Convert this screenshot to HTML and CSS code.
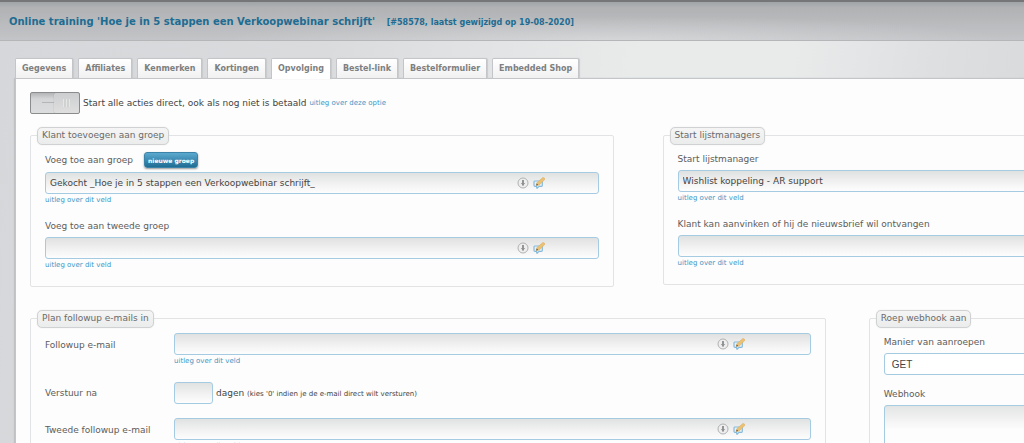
FILE: index.html
```
<!DOCTYPE html>
<html lang="nl">
<head>
  <meta charset="UTF-8">
  <meta name="viewport" content="width=device-width, initial-scale=1.0">
  <title>Online training - Opvolging</title>
  <link rel="stylesheet" href="styles.css">
</head>
<body>
  <!-- icons shared by the fields -->
  <svg class="sprite" width="0" height="0">
    <symbol id="icon-down" viewBox="0 0 12 12">
      <circle cx="6" cy="6" r="5" fill="#eeeeee" stroke="#b0b2b3" stroke-width="1"/>
      <path d="M6 3V8.500" fill="none" stroke="#7c7e7f" stroke-width="1.600"/>
      <path d="M3.800 6H8.200L6 8.600Z" fill="#8f9192"/>
    </symbol>
    <symbol id="icon-edit" viewBox="0 0 12 12">
      <path d="M1.500 4Q1 4 1 5V8.500Q1 9.300 2 9.300H3.500L4 11.300L6 9.300H8.500Q9.300 9.300 9.300 8.500V4Z" fill="#e4f1f9" stroke="#86badd" stroke-width="1.200" stroke-linejoin="round"/>
      <path d="M3.800 5.800L9.600 0.700Q11 0.300 11.700 1.500L11.500 2.800L6.200 8L3.300 8.500Z" fill="#ebc173" stroke="#dcb066" stroke-width="0.600"/>
      <path d="M3.200 8.600L3.800 6.600L5.200 8Z" fill="#55514a"/>
    </symbol>
  </svg>

  <header class="page-header">
    <h1>Online training 'Hoe je in 5 stappen een Verkoopwebinar schrijft' <small>[#58578, laatst gewijzigd op 19-08-2020]</small></h1>
  </header>

  <nav class="tabs">
    <a href="#gegevens">Gegevens</a>
    <a href="#affiliates">Affiliates</a>
    <a href="#kenmerken">Kenmerken</a>
    <a href="#kortingen">Kortingen</a>
    <a href="#opvolging" class="active">Opvolging</a>
    <a href="#bestel-link">Bestel-link</a>
    <a href="#bestelformulier">Bestelformulier</a>
    <a href="#embedded-shop">Embedded Shop</a>
  </nav>

  <form class="panel">
    <div class="direct">
      <input type="checkbox" class="switch" id="direct">
      <label for="direct">Start alle acties direct, ook als nog niet is betaald</label>
      <a href="#uitleg" class="help">uitleg over deze optie</a>
    </div>

    <div class="row row-groups">
      <section class="box">
        <h2>Klant toevoegen aan groep</h2>
        <div class="field">
          <div class="label-line with-button">
            <label for="groep">Voeg toe aan groep</label>
            <button type="button" class="new-group">nieuwe groep</button>
          </div>
          <div class="picker">
            <input type="text" id="groep" value="Gekocht _Hoe je in 5 stappen een Verkoopwebinar schrijft_">
            <div class="picker-icons">
              <button type="button" aria-label="Kies"><svg><use href="#icon-down"/></svg></button>
              <button type="button" aria-label="Bewerk"><svg><use href="#icon-edit"/></svg></button>
            </div>
          </div>
          <a href="#uitleg" class="help">uitleg over dit veld</a>
        </div>
        <div class="field">
          <div class="label-line">
            <label for="groep2">Voeg toe aan tweede groep</label>
          </div>
          <div class="picker">
            <input type="text" id="groep2">
            <div class="picker-icons">
              <button type="button" aria-label="Kies"><svg><use href="#icon-down"/></svg></button>
              <button type="button" aria-label="Bewerk"><svg><use href="#icon-edit"/></svg></button>
            </div>
          </div>
          <a href="#uitleg" class="help">uitleg over dit veld</a>
        </div>
      </section>

      <section class="box">
        <h2>Start lijstmanagers</h2>
        <div class="field">
          <div class="label-line">
            <label for="lijst">Start lijstmanager</label>
          </div>
          <input type="text" id="lijst" value="Wishlist koppeling - AR support">
          <a href="#uitleg" class="help">uitleg over dit veld</a>
        </div>
        <div class="field">
          <div class="label-line">
            <label for="nieuwsbrief">Klant kan aanvinken of hij de nieuwsbrief wil ontvangen</label>
          </div>
          <input type="text" id="nieuwsbrief">
          <a href="#uitleg" class="help">uitleg over dit veld</a>
        </div>
      </section>
    </div>

    <div class="row row-followup">
      <section class="box">
        <h2>Plan followup e-mails in</h2>
        <div class="line">
          <label for="followup">Followup e-mail</label>
          <div class="control">
            <div class="picker">
              <input type="text" id="followup">
              <div class="picker-icons">
                <button type="button" aria-label="Kies"><svg><use href="#icon-down"/></svg></button>
                <button type="button" aria-label="Bewerk"><svg><use href="#icon-edit"/></svg></button>
              </div>
            </div>
            <a href="#uitleg" class="help">uitleg over dit veld</a>
          </div>
        </div>
        <div class="line">
          <label for="dagen">Verstuur na</label>
          <div class="control days">
            <input type="text" id="dagen">
            <span>dagen <small>(kies '0' indien je de e-mail direct wilt versturen)</small></span>
          </div>
        </div>
        <div class="line">
          <label for="followup2">Tweede followup e-mail</label>
          <div class="control">
            <div class="picker">
              <input type="text" id="followup2">
              <div class="picker-icons">
                <button type="button" aria-label="Kies"><svg><use href="#icon-down"/></svg></button>
                <button type="button" aria-label="Bewerk"><svg><use href="#icon-edit"/></svg></button>
              </div>
            </div>
            <a href="#uitleg" class="help">uitleg over dit veld</a>
          </div>
        </div>
      </section>

      <section class="box">
        <h2>Roep webhook aan</h2>
        <div class="field">
          <div class="label-line">
            <label for="methode">Manier van aanroepen</label>
          </div>
          <select id="methode">
            <option>GET</option>
            <option>POST</option>
          </select>
        </div>
        <div class="field">
          <div class="label-line">
            <label for="webhook">Webhook</label>
          </div>
          <textarea id="webhook" rows="4"></textarea>
        </div>
      </section>
    </div>
  </form>
</body>
</html>
```
FILE: styles.css
```
* {
  box-sizing: border-box;
}

body {
  margin: 0;
  overflow-x: hidden;
  font-family: "DejaVu Sans", Verdana, sans-serif;
  font-size: 9px;
  color: #5c5c5c;
  background: linear-gradient(100deg, #d5d7da 0%, #d9dbdd 30%, #e9ebeb 58%, #e9ebeb 72%, #dedfe1 85%, #d5d7d9 100%);
}

.sprite {
  position: absolute;
}

/* header */
.page-header {
  height: 41px;
  padding: 0 9px;
  display: flex;
  align-items: center;
  border-top: 2px solid #757677;
  border-bottom: 1px solid #b4b6b8;
  background:
    radial-gradient(ellipse at 60% 100%, rgba(255, 255, 255, 0.3), rgba(255, 255, 255, 0) 45%),
    linear-gradient(#a0a4a6, #b0b2b4 15%, #c2c4c7);
}
.page-header h1 {
  margin: 0;
  font-size: 10px;
  color: #1d6c93;
}
.page-header small {
  margin-left: 8px;
  font-size: 8px;
}

/* tabs */
.tabs {
  display: flex;
  gap: 5px;
  padding: 17px 15px 0;
}
.tabs a {
  height: 20px;
  padding: 0 6px;
  line-height: 19px;
  font-size: 8px;
  font-weight: bold;
  color: #7d7f80;
  text-decoration: none;
  background: linear-gradient(#fff, #f1f1f2);
  border: 1px solid #c3c5c8;
  border-bottom: 0;
  border-radius: 2px 2px 0 0;
  box-shadow: 1px 0 1px #c8cacc;
}
.tabs .active {
  position: relative;
  height: 21px;
  margin-bottom: -1px;
  background: #fff;
}

/* the panel is wider than the window */
.panel {
  margin: 0 -83px 0 15px;
  padding: 13px 15px 20px 14px;
  background: #fdfdfd;
  border: 1px solid #c3c5c8;
  box-shadow: -1px 0 1px #bfc1c3;
}

.direct {
  display: flex;
  align-items: center;
  gap: 3px;
  color: #444;
}
/* sliding on/off switch */
.switch {
  appearance: none;
  display: flex;
  width: 50px;
  height: 22px;
  margin: 0;
  border: 1px solid #8b8c8d;
  border-radius: 2px;
  background: linear-gradient(#b4b5b6, #d5d6d7 30%, #dcdddd);
}
.switch::before {
  content: "";
  width: 12px;
  height: 1px;
  margin: 9px 0 0 11px;
  background: #b4b5b6;
}
.switch::after {
  content: "";
  width: 25px;
  border-radius: 2px;
  background:
    repeating-linear-gradient(to right, #e6e6e6 0 1px, #d0d1d1 1px 3px) center / 7px 8px no-repeat,
    linear-gradient(#cdcecf, #dfdfe0);
  box-shadow: 0 0 1px #888;
}

.row {
  display: grid;
}
.row-groups {
  grid-template-columns: 55% 1fr;
  align-items: start;
  gap: 49px;
  margin-top: 21px;
}
.row-followup {
  grid-template-columns: 75% 1fr;
  gap: 43px;
  margin-top: 31px;
}

.box {
  padding: 0 14px 14px;
  border: 1px solid #e2e3e4;
  border-radius: 2px;
}
.box h2 {
  width: max-content;
  height: 18px;
  margin: -9px 0 5px -8px;
  padding: 0 4px;
  line-height: 15px;
  font-size: 9px;
  font-weight: normal;
  color: #6a6a6a;
  background: linear-gradient(#f5f5f5, #ebecec);
  border: 1px solid #d0d1d2;
  border-radius: 5px;
  box-shadow: 0 0 1px #d0d1d2;
}

.field {
  margin-bottom: 10px;
}
.field:last-child {
  margin-bottom: 0;
}
.label-line {
  display: flex;
  align-items: center;
  gap: 11px;
  height: 20px;
  padding-bottom: 2px;
}
.with-button {
  height: 22px;
}
.new-group {
  height: 16px;
  padding: 0 3px;
  font: bold 6px "DejaVu Sans", Verdana, sans-serif;
  color: #fff;
  background: linear-gradient(#5ba9cf, #1f6d94);
  border: 1px solid #3b83a8;
  border-radius: 3px;
  box-shadow: 0 1px 2px #999;
}

input[type="text"],
select,
textarea {
  display: block;
  width: 100%;
  height: 22px;
  padding: 0 4px;
  font: 9px "DejaVu Sans", Verdana, sans-serif;
  color: #444;
  border: 1px solid #a5cbe2;
  border-radius: 3px;
  outline: none;
  background: linear-gradient(#e0e1e1, #f3f3f3 60%, #fdfdfd);
}
select {
  appearance: none;
  padding: 0 7px;
  font: 10px "Liberation Sans", Arial, sans-serif;
  background: #fff;
}
textarea {
  height: 60px;
  resize: none;
  background: linear-gradient(#e3e4e4, #f3f3f3 14px, #fdfdfd 24px);
}

.picker {
  position: relative;
}
.picker-icons {
  position: absolute;
  top: 5px;
  right: 54px;
  display: flex;
  gap: 4px;
}
.line .picker-icons {
  right: 66px;
}
.picker-icons button {
  width: 12px;
  height: 12px;
  padding: 0;
  border: 0;
  background: none;
}
.picker-icons svg {
  display: block;
  width: 12px;
  height: 12px;
}

.help {
  display: block;
  height: 13px;
  line-height: 13px;
  font-size: 7px;
  color: #3d97c6;
  text-decoration: none;
}

.line {
  display: flex;
  margin-bottom: 13px;
}
.line > label {
  flex: 0 0 129px;
  line-height: 24px;
}
.control {
  flex: 1;
}
.days {
  display: flex;
  align-items: center;
  gap: 3px;
  color: #444;
}
.days input[type="text"] {
  width: 39px;
}
.days small {
  font-size: 7px;
}
```
